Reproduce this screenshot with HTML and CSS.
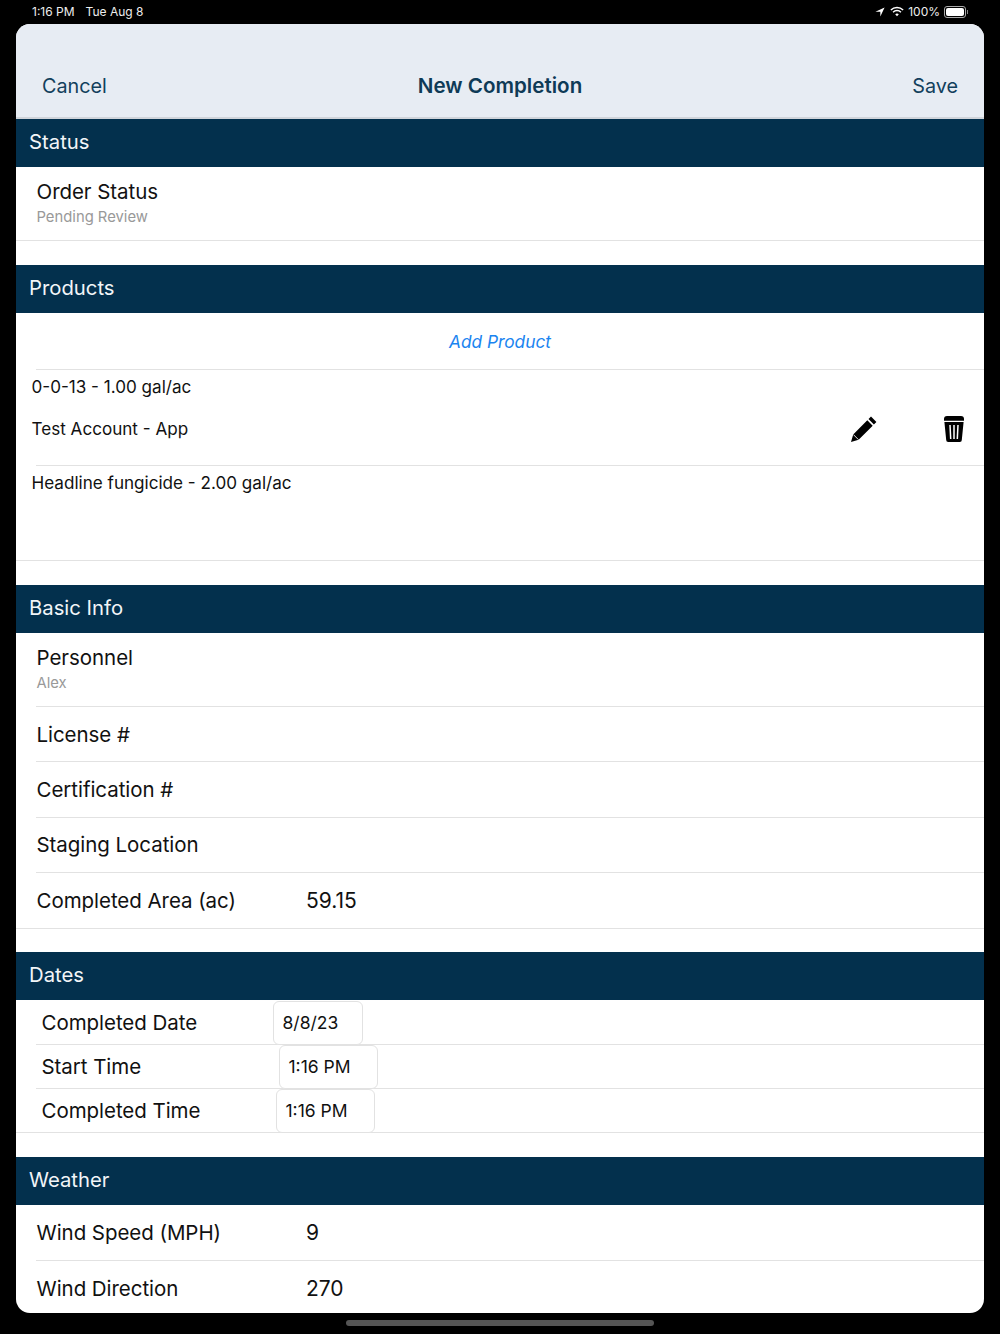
FILE: index.html
```html
<!DOCTYPE html>
<html lang="en">
<head>
    <meta charset="UTF-8">
    <title>New Completion</title>
    <link rel="stylesheet" href="styles.css">
</head>
<body>
    <div class="status-bar">
        <div class="status-left"><span>1:16 PM</span><span>Tue Aug 8</span></div>
        <div class="status-right">
            <svg class="icon-location" viewBox="0 0 12 12"><path d="M11.500.5.500 5.600h5.900v5.900z" fill="#fff"/></svg>
            <svg class="icon-wifi" viewBox="0 0 16 12" fill="none" stroke="#fff" stroke-width="1.700">
                <path d="M1 4.200a10 10 0 0 1 14 0"/>
                <path d="M3.500 6.800a6.400 6.400 0 0 1 9 0"/>
                <path d="M8 11.400 5.900 9.200a3 3 0 0 1 4.200 0z" fill="#fff" stroke="none"/>
            </svg>
            <span>100%</span>
            <div class="battery"><div class="battery-fill"></div></div>
            <div class="battery-tip"></div>
        </div>
    </div>

    <div class="sheet">
        <div class="nav">
            <span class="nav-btn">Cancel</span>
            <span class="nav-title">New Completion</span>
            <span class="nav-btn nav-btn-right">Save</span>
        </div>

        <div class="section-head">Status</div>
        <div class="row row-tall row-full">
            <div class="label">Order Status</div>
            <div class="sub">Pending Review</div>
        </div>

        <div class="section-head section-gap">Products</div>
        <div class="add-row"><span>Add Product</span></div>
        <div class="product">
            <div>0-0-13 - 1.00 gal/ac</div>
            <div class="product-line">
                <span>Test Account - App</span>
                <div class="product-actions">
                    <svg class="icon-pencil" viewBox="0 0 26 26">
                        <path d="M20 .6 25.400 6 22.900 8.500 17.500 3.100zM16.300 4.300 21.700 9.700 7.600 23.800 0 26 2.200 18.400z" fill="#000"/>
                        <path d="M2.400 18.600 7.400 23.600" stroke="#fff" stroke-width=".9"/>
                    </svg>
                    <svg class="icon-trash" viewBox="0 0 20 26">
                        <path d="M3 0h14a3 3 0 0 1 3 3v1.800H0V3a3 3 0 0 1 3-3z" fill="#000"/>
                        <path d="M.4 6h19.200l-1.800 18a2 2 0 0 1-2 2H4.200a2 2 0 0 1-2-2z" fill="#000"/>
                        <path d="M6 9 6.700 23M10 9V23M14 9 13.300 23" stroke="#fff" stroke-width="1.500"/>
                    </svg>
                </div>
            </div>
        </div>
        <div class="product product-last">
            <div>Headline fungicide - 2.00 gal/ac</div>
        </div>

        <div class="section-head section-gap">Basic Info</div>
        <div class="row row-tall">
            <div class="label">Personnel</div>
            <div class="sub">Alex</div>
        </div>
        <div class="row"><div class="label">License #</div></div>
        <div class="row"><div class="label">Certification #</div></div>
        <div class="row"><div class="label">Staging Location</div></div>
        <div class="row row-full row-value">
            <div class="label">Completed Area (ac)</div>
            <div class="value">59.15</div>
        </div>

        <div class="section-head section-gap">Dates</div>
        <div class="date-row">
            <div class="date-label date-label-a">Completed Date</div>
            <div class="date-box date-box-a">8/8/23</div>
        </div>
        <div class="date-row">
            <div class="date-label date-label-b">Start Time</div>
            <div class="date-box">1:16 PM</div>
        </div>
        <div class="date-row date-row-last">
            <div class="date-label date-label-c">Completed Time</div>
            <div class="date-box">1:16 PM</div>
        </div>

        <div class="section-head section-gap">Weather</div>
        <div class="row row-value">
            <div class="label">Wind Speed (MPH)</div>
            <div class="value">9</div>
        </div>
        <div class="row row-value row-end">
            <div class="label">Wind Direction</div>
            <div class="value">270</div>
        </div>
    </div>

    <div class="home-bar"></div>
</body>
</html>
```

FILE: styles.css
```css
html, body {
    margin: 0;
    padding: 0;
}

body {
    width: 1000px;
    height: 1334px;
    overflow: hidden;
    background-color: #000;
    font-family: Inter, "Liberation Sans", sans-serif;
    color: #111;
}

.status-bar {
    height: 24px;
    box-sizing: border-box;
    display: flex;
    justify-content: space-between;
    align-items: center;
    padding: 0 32px 1px 32px;
    color: #eee;
    font-size: 12px;
}

.status-left {
    display: flex;
    gap: 11px;
}

.status-right {
    display: flex;
    align-items: center;
}

.icon-location {
    width: 10px;
    height: 10px;
    margin-right: 5px;
}

.icon-wifi {
    width: 14px;
    height: 11px;
    margin-right: 4px;
}

.battery {
    width: 18px;
    height: 8px;
    margin-left: 4px;
    padding: 1px;
    border: 1px solid #aaa;
    border-radius: 3px;
}

.battery-fill {
    height: 100%;
    background-color: #fff;
    border-radius: 2px;
}

.battery-tip {
    width: 1px;
    height: 4px;
    margin-left: 1px;
    background-color: #888;
}

.sheet {
    width: 968px;
    height: 1289px;
    margin-left: 16px;
    overflow: hidden;
    background-color: #fff;
    border-radius: 14px;
}

.nav {
    height: 95px;
    box-sizing: border-box;
    display: flex;
    align-items: flex-end;
    padding: 0 26px 19px 26px;
    background-color: #e7ecf3;
    border-bottom: 2px solid #d0d4da;
    color: #12405c;
}

.nav-btn {
    flex: 1;
    font-size: 19.800px;
}

.nav-btn-right {
    text-align: right;
}

.nav-title {
    font-size: 20.600px;
    font-weight: 600;
    color: #0e3a56;
}

.section-head {
    height: 48px;
    line-height: 46px;
    margin-bottom: 1px;
    padding-left: 13px;
    background-color: #03304d;
    color: #f2f5f8;
    font-size: 20.300px;
}

.section-gap {
    margin-top: 23.500px;
}

.row {
    height: 55.400px;
    box-sizing: border-box;
    margin-left: 20px;
    padding-left: 0.500px;
    display: flex;
    align-items: center;
    border-bottom: 1px solid #e2e2e2;
}

.row-full {
    margin-left: 0;
    padding-left: 20.500px;
}

.row-tall {
    height: 73px;
    display: block;
    padding-top: 11px;
}

.row-value .label {
    width: 269.500px;
}

.row-end {
    border-bottom: none;
}

.label {
    font-size: 20.500px;
    letter-spacing: -0.050px;
    line-height: 25px;
}

.value {
    font-size: 21px;
}

.sub {
    margin-top: 4px;
    font-size: 14.800px;
    line-height: 18px;
    color: #999;
}

.add-row {
    height: 56px;
    box-sizing: border-box;
    margin-left: 20px;
    padding-right: 20px;
    display: flex;
    justify-content: center;
    align-items: center;
    color: #1a84f0;
    font-size: 17.300px;
    font-style: italic;
    border-bottom: 1px solid #e2e2e2;
}

.product {
    height: 96px;
    box-sizing: border-box;
    padding: 6px 0 0 15.500px;
    font-size: 17.100px;
    line-height: 22px;
    position: relative;
}

.product::after {
    content: "";
    position: absolute;
    left: 20px;
    right: 0;
    bottom: 0;
    border-bottom: 1px solid #e2e2e2;
}

.product-last::after {
    left: 0;
    bottom: 1px;
}

.product-line {
    display: flex;
    justify-content: space-between;
    align-items: center;
    margin-top: 20px;
    height: 22px;
}

.product-actions {
    display: flex;
    align-items: center;
    gap: 67px;
    padding-right: 20.500px;
}

.icon-pencil {
    width: 26px;
    height: 26px;
}

.icon-trash {
    width: 20px;
    height: 26px;
}

.date-row {
    height: 44px;
    box-sizing: border-box;
    margin-left: 20px;
    padding-left: 5.500px;
    display: flex;
    border-bottom: 1px solid #e2e2e2;
}

.date-row-last {
    margin-left: 0;
    padding-left: 25.500px;
}

.date-label {
    font-size: 20.500px;
    letter-spacing: -0.050px;
    line-height: 44px;
}

.date-label-a {
    width: 231px;
}

.date-label-b {
    width: 237px;
}

.date-label-c {
    width: 234px;
}

.date-box {
    width: 99px;
    height: 44px;
    box-sizing: border-box;
    padding-left: 9px;
    border: 1px solid #e2e2e2;
    border-radius: 6px;
    font-size: 17.500px;
    line-height: 42px;
    background-color: #fff;
}

.date-box-a {
    width: 90px;
}

.home-bar {
    width: 308px;
    height: 6px;
    margin: 7px auto 0;
    background-color: #555;
    border-radius: 3px;
}
```
